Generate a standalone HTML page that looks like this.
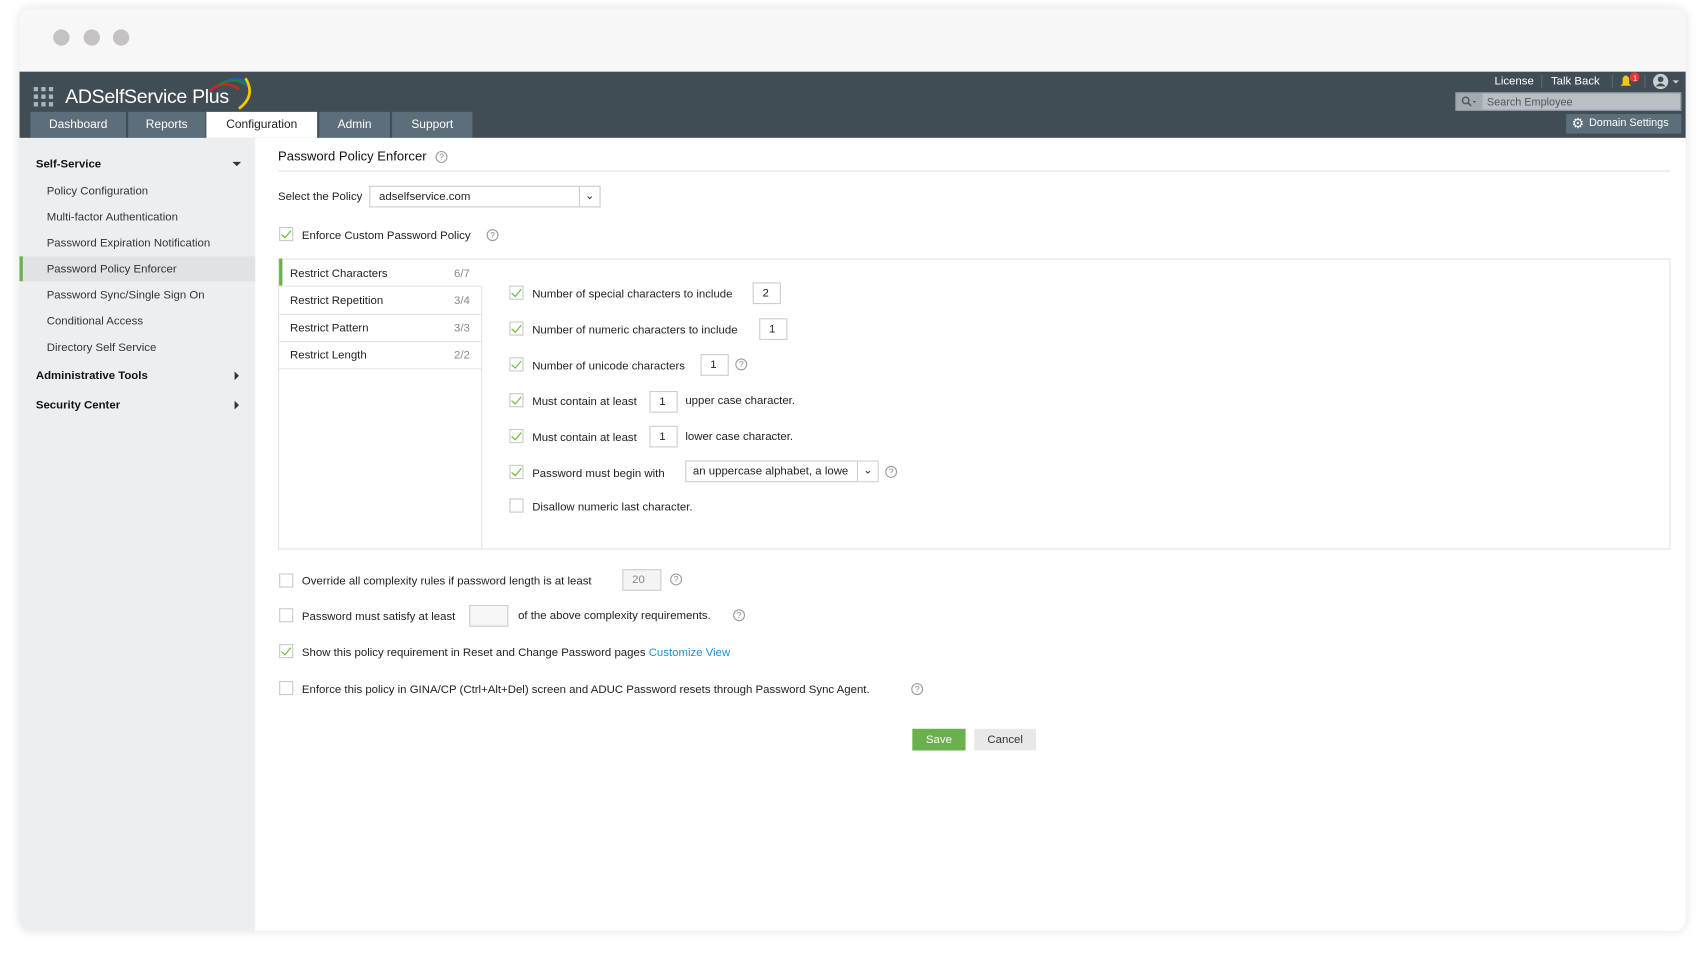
<!DOCTYPE html>
<html><head><meta charset="utf-8"><style>
*{margin:0;padding:0;box-sizing:border-box}
body{width:1703px;height:957px;background:#fff;overflow:hidden;font-family:"Liberation Sans",sans-serif;color:#222}
#s{position:absolute;left:0;top:0;width:1568px;height:881px;transform:scale(1.0861);transform-origin:0 0}
.a{position:absolute}
.win{left:18px;top:8px;width:1534px;height:849px;background:#f7f7f7;border-radius:10px;box-shadow:0 0 10px rgba(0,0,0,.12);overflow:hidden}
.dot{width:15px;height:15px;border-radius:50%;background:#c6c2c2;top:27px}
.t{font-size:10.5px;white-space:nowrap}
.tab{top:103px;height:24px;background:#5b6e7a;color:#fff;font-size:11px;text-align:center;line-height:25px}
.cb{width:13px;height:13px;border:1px solid #c8c8c8;background:#fff}
.cb.c::after{content:"";position:absolute;left:3px;top:0px;width:4px;height:8px;border:solid #5cb82e;border-width:0 1.5px 1.5px 0;transform:rotate(40deg)}
.in{height:20px;border:1px solid #ccc;background:#fff;font-size:10.5px;padding-left:8px;line-height:18px}
.q{width:11px;height:11px;border:1px solid #999;border-radius:50%;font-size:8px;color:#888;text-align:center;line-height:9px}
.side{font-size:10.5px;color:#333}
</style></head><body><div id="s">
<div class="a win"></div>
<div class="a dot" style="left:49px"></div><div class="a dot" style="left:77px"></div><div class="a dot" style="left:104px"></div>
<div class="a" style="left:18px;top:66px;width:1534px;height:61px;background:#414d55"></div>
<svg class="a" style="left:31px;top:80px" width="18" height="18"><g fill="#aab4bb"><rect x="0" y="0" width="4" height="4"/><rect x="7" y="0" width="4" height="4"/><rect x="14" y="0" width="4" height="4"/><rect x="0" y="7" width="4" height="4"/><rect x="7" y="7" width="4" height="4"/><rect x="14" y="7" width="4" height="4"/><rect x="0" y="14" width="4" height="4"/><rect x="7" y="14" width="4" height="4"/><rect x="14" y="14" width="4" height="4"/></g></svg>
<div class="a" style="left:60px;top:79px;color:#fff;font-size:18px;letter-spacing:-0.3px">ADSelfService Plus</div>
<svg class="a" style="left:190px;top:70px" width="45" height="40"><path d="M3 14 Q15 2 30 12" stroke="#c62828" stroke-width="2.5" fill="none"/><path d="M12 8 Q25 0 36 8" stroke="#2e7d32" stroke-width="2" fill="none"/><path d="M20 4 Q33 -1 38 10" stroke="#1565c0" stroke-width="2" fill="none"/><path d="M36 2 Q46 18 30 30" stroke="#f9c800" stroke-width="2.5" fill="none"/></svg>
<div class="a tab" style="left:28px;width:88px">Dashboard</div>
<div class="a tab" style="left:118px;width:71px">Reports</div>
<div class="a tab" style="left:190px;width:102px;background:#fff;color:#222">Configuration</div>
<div class="a tab" style="left:294px;width:65px">Admin</div>
<div class="a tab" style="left:361px;width:74px">Support</div>
<div class="a t" style="left:1376px;top:69px;color:#fff">License</div>
<div class="a" style="left:1419px;top:69px;width:1px;height:12px;background:#5b6870"></div>
<div class="a t" style="left:1428px;top:69px;color:#fff">Talk Back</div>
<div class="a" style="left:1484px;top:69px;width:1px;height:12px;background:#5b6870"></div>
<svg class="a" style="left:1490px;top:66px" width="22" height="16"><path d="M2 13 L4 11 L4 6 Q7 1 10 6 L10 11 L12 13Z" fill="#f5c518"/><circle cx="15" cy="5" r="4.5" fill="#e53935"/><text x="13.5" y="8" font-size="7" fill="#fff" font-family="Liberation Sans">1</text></svg>
<div class="a" style="left:1514px;top:69px;width:1px;height:12px;background:#5b6870"></div>
<svg class="a" style="left:1521px;top:66px" width="28" height="18"><circle cx="8" cy="9" r="7" fill="#c8ced2"/><circle cx="8" cy="7" r="2.6" fill="#414d55"/><path d="M3.5 13.5 Q8 8 12.5 13.5" fill="#414d55"/><path d="M19 8 L25 8 L22 11Z" fill="#c8ced2"/></svg>
<div class="a" style="left:1340px;top:85px;width:208px;height:17px;background:#b9bfc3;border:1px solid #8f989e"></div>
<div class="a" style="left:1341px;top:86px;width:24px;height:15px;background:#a3abb1"></div>
<svg class="a" style="left:1345px;top:88px" width="16" height="11"><circle cx="4.5" cy="4.5" r="3" stroke="#555" stroke-width="1.3" fill="none"/><path d="M6.7 6.7 L9.5 9.5" stroke="#555" stroke-width="1.5"/><path d="M11 5 L14 5 L12.5 7Z" fill="#555"/></svg>
<div class="a t" style="left:1369px;top:89px;font-size:10px;color:#555">Search Employee</div>
<div class="a" style="left:1442px;top:105px;width:106px;height:18px;background:#5b6e7a;color:#fff;font-size:10px;line-height:18px;padding-left:21px">Domain Settings</div>
<div class="a" style="left:1447px;top:105px;color:#fff;font-size:13px;line-height:18px">&#9881;</div>
<div class="a" style="left:18px;top:127px;width:217px;height:730px;background:#eceff1;border-bottom-left-radius:10px"></div>
<div class="a" style="left:235px;top:127px;width:1317px;height:730px;background:#fff;border-bottom-right-radius:10px"></div>
<div class="a side" style="left:33px;top:145px;font-weight:bold;color:#111">Self-Service</div>
<div class="a" style="left:214px;top:149px;border:4px solid transparent;border-top:4px solid #333;border-bottom:0"></div>
<div class="a side" style="left:43px;top:170px">Policy Configuration</div>
<div class="a side" style="left:43px;top:194px">Multi-factor Authentication</div>
<div class="a side" style="left:43px;top:218px">Password Expiration Notification</div>
<div class="a" style="left:18px;top:236px;width:217px;height:23px;background:#dfe3e6;border-left:3px solid #6ab04c"></div>
<div class="a side" style="left:43px;top:242px">Password Policy Enforcer</div>
<div class="a side" style="left:43px;top:266px">Password Sync/Single Sign On</div>
<div class="a side" style="left:43px;top:290px">Conditional Access</div>
<div class="a side" style="left:43px;top:314px">Directory Self Service</div>
<div class="a side" style="left:33px;top:340px;font-weight:bold;color:#111">Administrative Tools</div>
<div class="a" style="left:216px;top:342px;border:4px solid transparent;border-left:4px solid #333;border-right:0"></div>
<div class="a side" style="left:33px;top:367px;font-weight:bold;color:#111">Security Center</div>
<div class="a" style="left:216px;top:369px;border:4px solid transparent;border-left:4px solid #333;border-right:0"></div>
<div class="a" style="left:256px;top:137px;font-size:12px;color:#111">Password Policy Enforcer</div>
<div class="a q" style="left:401px;top:139px">?</div>
<div class="a" style="left:256px;top:157px;width:1282px;height:1px;background:#e2e2e2"></div>
<div class="a t" style="left:256px;top:175px">Select the Policy</div>
<div class="a in" style="left:340px;top:171px;width:213px">adselfservice.com</div>
<div class="a" style="left:533px;top:172px;width:19px;height:18px;border-left:1px solid #ccc;font-size:10px;text-align:center;line-height:18px">&#8964;</div>
<div class="a cb c" style="left:257px;top:209px"></div>
<div class="a t" style="left:278px;top:211px">Enforce Custom Password Policy</div>
<div class="a q" style="left:448px;top:211px">?</div>
<div class="a" style="left:256px;top:238px;width:1282px;height:268px;border:1px solid #e2e2e2"></div>
<div class="a" style="left:443px;top:263px;width:1px;height:243px;background:#e2e2e2"></div>
<div class="a" style="left:257px;top:238px;width:3px;height:25px;background:#6ab04c"></div>
<div class="a" style="left:257px;top:263px;width:186px;height:1px;background:#e6e6e6"></div>
<div class="a" style="left:257px;top:289px;width:186px;height:1px;background:#e6e6e6"></div>
<div class="a" style="left:257px;top:314px;width:186px;height:1px;background:#e6e6e6"></div>
<div class="a" style="left:257px;top:339px;width:186px;height:1px;background:#e6e6e6"></div>
<div class="a t" style="left:267px;top:246px">Restrict Characters</div><div class="a t" style="left:418px;top:246px;color:#888">6/7</div>
<div class="a t" style="left:267px;top:271px">Restrict Repetition</div><div class="a t" style="left:418px;top:271px;color:#888">3/4</div>
<div class="a t" style="left:267px;top:296px">Restrict Pattern</div><div class="a t" style="left:418px;top:296px;color:#888">3/3</div>
<div class="a t" style="left:267px;top:321px">Restrict Length</div><div class="a t" style="left:418px;top:321px;color:#888">2/2</div>
<div class="a cb c" style="left:469px;top:263px"></div><div class="a t" style="left:490px;top:265px">Number of special characters to include</div><div class="a in" style="left:693px;top:260px;width:26px">2</div>
<div class="a cb c" style="left:469px;top:296px"></div><div class="a t" style="left:490px;top:298px">Number of numeric characters to include</div><div class="a in" style="left:699px;top:293px;width:26px">1</div>
<div class="a cb c" style="left:469px;top:329px"></div><div class="a t" style="left:490px;top:331px">Number of unicode characters</div><div class="a in" style="left:645px;top:326px;width:26px">1</div><div class="a q" style="left:677px;top:330px">?</div>
<div class="a cb c" style="left:469px;top:362px"></div><div class="a t" style="left:490px;top:364px">Must contain at least</div><div class="a in" style="left:598px;top:360px;width:26px">1</div><div class="a t" style="left:631px;top:363px">upper case character.</div>
<div class="a cb c" style="left:469px;top:395px"></div><div class="a t" style="left:490px;top:397px">Must contain at least</div><div class="a in" style="left:598px;top:392px;width:26px">1</div><div class="a t" style="left:631px;top:396px">lower case character.</div>
<div class="a cb c" style="left:469px;top:428px"></div><div class="a t" style="left:490px;top:430px">Password must begin with</div>
<div class="a in" style="left:631px;top:424px;width:178px;overflow:hidden;white-space:nowrap;padding-right:22px;padding-left:6px">an uppercase alphabet, a lowe</div>
<div class="a" style="left:789px;top:425px;width:19px;height:18px;border-left:1px solid #ccc;background:#fff;font-size:10px;text-align:center;line-height:18px">&#8964;</div>
<div class="a q" style="left:815px;top:429px">?</div>
<div class="a cb" style="left:469px;top:459px"></div><div class="a t" style="left:490px;top:461px">Disallow numeric last character.</div>
<div class="a cb" style="left:257px;top:528px"></div><div class="a t" style="left:278px;top:529px">Override all complexity rules if password length is at least</div>
<div class="a in" style="left:573px;top:524px;width:36px;background:#f4f4f4;color:#888">20</div><div class="a q" style="left:617px;top:528px">?</div>
<div class="a cb" style="left:257px;top:560px"></div><div class="a t" style="left:278px;top:562px">Password must satisfy at least</div>
<div class="a in" style="left:432px;top:557px;width:36px;background:#f7f7f7"></div>
<div class="a t" style="left:477px;top:561px">of the above complexity requirements.</div><div class="a q" style="left:675px;top:561px">?</div>
<div class="a cb c" style="left:257px;top:593px"></div><div class="a t" style="left:278px;top:595px">Show this policy requirement in Reset and Change Password pages <span style="color:#1a8fd6">Customize View</span></div>
<div class="a cb" style="left:257px;top:627px"></div><div class="a t" style="left:278px;top:629px">Enforce this policy in GINA/CP (Ctrl+Alt+Del) screen and ADUC Password resets through Password Sync Agent.</div><div class="a q" style="left:839px;top:629px">?</div>
<div class="a" style="left:840px;top:671px;width:49px;height:20px;background:#6ab04c;color:#fff;font-size:10.5px;text-align:center;line-height:20px">Save</div>
<div class="a" style="left:897px;top:671px;width:57px;height:20px;background:#e8e8e8;color:#333;font-size:10.5px;text-align:center;line-height:20px">Cancel</div>
</div></body></html>
